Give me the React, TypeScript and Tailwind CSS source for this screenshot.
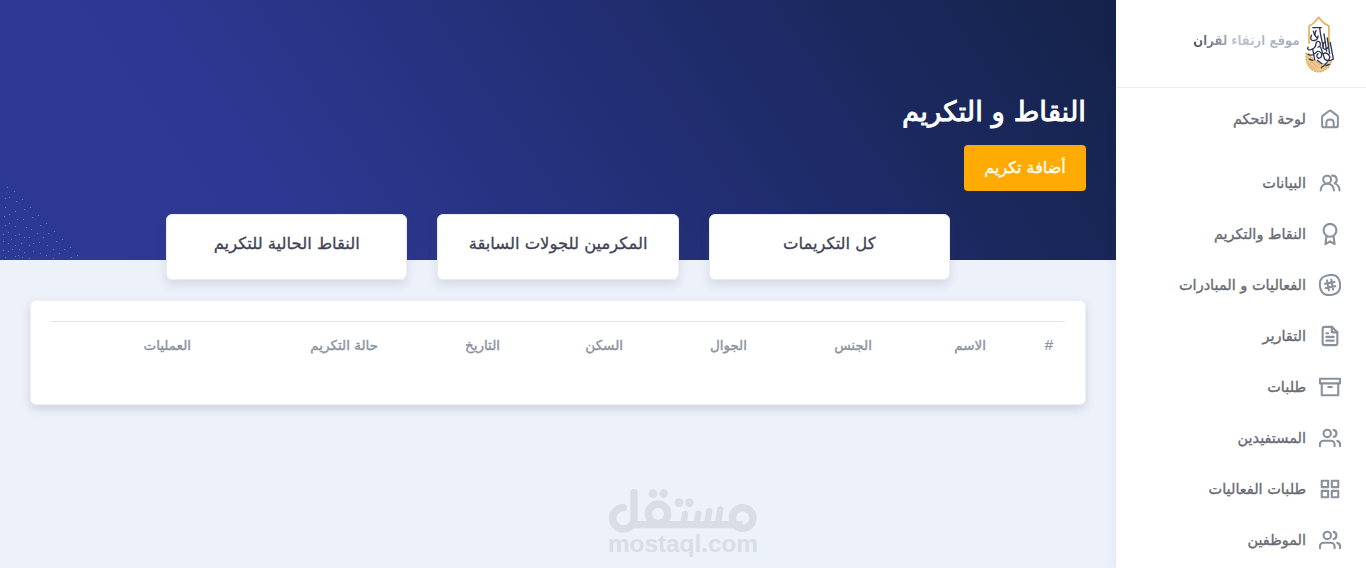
import type { ReactNode } from 'react';
import { FiArchive, FiAward, FiFileText, FiGrid, FiUsers } from 'react-icons/fi';

function Glyph({ children }: { children: ReactNode }) {
  return (
    <svg viewBox="0 0 24 24" className="size-[22px]" fill="none" stroke="currentColor" strokeWidth="2.2" strokeLinecap="round" strokeLinejoin="round">
      {children}
    </svg>
  );
}

const HomeIcon = () => (
  <Glyph>
    <path d="M3.4 9.9 Q3.4 8.9 4.2 8.3 L10.9 3.2 Q12 2.4 13.1 3.2 L19.8 8.3 Q20.6 8.9 20.6 9.9 V19 Q20.6 21 18.6 21 H5.4 Q3.4 21 3.4 19 Z" />
    <path d="M8 20.6 V16.4 Q8 12.6 12 12.6 Q16 12.6 16 16.4 V20.6" />
  </Glyph>
);

const PeopleIcon = () => (
  <Glyph>
    <circle cx="8.9" cy="8.3" r="4.3" />
    <path d="M1.8 20.2 C2 15.6 5 12.9 8.9 12.9 C12.9 12.9 16 15.6 16.4 20.2" />
    <path d="M14.2 4 C20 3.4 20.8 10.4 17 12.4 C20.2 13.4 22.2 16.2 22.4 20.2" />
  </Glyph>
);

const HashIcon = () => (
  <Glyph>
    <path d="M6.6 2.3 Q12 .4 16.8 1.4 Q21 2.8 22.4 8 Q23.8 13.4 22.2 17.4 Q20.6 20.8 16.4 22 Q10.6 23.8 6.9 22.4 Q2.9 20.6 1.6 16 Q.2 10.6 1.6 6.8 Q3 3.5 6.6 2.3Z" />
    <path d="M8.8 6.9 L10.8 18 M13.4 6 L15.4 17.1 M6.4 10.6 L17 8.7 M7.2 15.3 L17.8 13.4" />
  </Glyph>
);

const nav = [
  { label: 'لوحة التحكم', icon: <HomeIcon />, first: true },
  { label: 'البيانات', icon: <PeopleIcon /> },
  { label: 'النقاط والتكريم', icon: <FiAward size={22} strokeWidth={2.3} /> },
  { label: 'الفعاليات و المبادرات', icon: <HashIcon /> },
  { label: 'التقارير', icon: <FiFileText size={22} strokeWidth={2.3} /> },
  { label: 'طلبات', icon: <FiArchive size={22} strokeWidth={2.3} /> },
  { label: 'المستفيدين', icon: <FiUsers size={22} strokeWidth={2.3} /> },
  { label: 'طلبات الفعاليات', icon: <FiGrid size={22} strokeWidth={2.3} /> },
  { label: 'الموظفين', icon: <FiUsers size={22} strokeWidth={2.3} /> },
];

function Emblem() {
  return (
    <svg viewBox="20 15 96 178" className="h-[59px] w-8 shrink-0" fill="none" strokeLinejoin="round" strokeLinecap="round">
      <path d="M35 100 V48 Q48 42 53 35 L64 22 L75 35 Q82 42 95 48 V108" stroke="#e3ae5c" strokeWidth="5" />
      <path d="M26 130 Q24 170 48 182 Q66 192 84 180 Q100 170 102 156 Q84 162 66 158 Q44 150 34 128Z" fill="#ecc88f" />
      <path d="M26 130 Q24 170 48 182 Q66 192 84 180 Q100 170 102 156" stroke="#dfa652" strokeWidth="4" strokeDasharray="3 6" />
      <path d="M32 146 L60 172 M38 138 L78 174 M34 162 L52 178" stroke="#dba24e" strokeWidth="3" strokeDasharray="4 5" />
      <g stroke="#2b3554" strokeWidth="4">
        <path d="M46 53 H72 M48 64 L52 76 M67 54 L70 76 L78 112" />
        <path d="M56 62 Q48 78 60 84 M42 76 Q36 94 50 92 Q62 90 62 78 M80 72 L88 124" />
        <path d="M32 112 Q28 122 38 120 Q56 116 56 100 Q60 90 68 98 Q72 110 62 112 M90 84 L97 132 M99 98 L108 146" />
        <path d="M46 118 L52 150 M32 134 Q44 140 54 130 Q62 120 72 130 Q76 144 64 146 Q54 140 62 132" />
        <path d="M70 112 L82 148 Q92 158 108 148 M78 132 Q90 124 98 142 Q92 160 72 174 M60 152 L74 162" />
        <path d="M84 96 Q74 100 78 116 Q88 122 92 112 M36 148 L46 152 M86 168 L96 164" />
      </g>
    </svg>
  );
}

function Sidebar() {
  return (
    <aside className="z-10 flex w-[250px] shrink-0 flex-col bg-white shadow-[0_0_14px_rgba(40,60,110,0.05)]">
      <div className="flex h-22 items-start gap-1 border-b border-[#ebedf0] pt-[15px] pr-[30px]">
        <Emblem />
        <span className="mt-[13px] origin-right scale-x-[0.86] bg-gradient-to-l from-[#a9b1c1] from-10% via-[#bec3ce] via-60% to-[#4b5262] bg-clip-text text-[13.6px] leading-[24px] font-bold whitespace-nowrap text-transparent">
          موقع ارتقاء لقران
        </span>
      </div>
      <nav className="flex flex-col pt-[5px] pr-[25px]">
        {nav.map((item) => (
          <a key={item.label} className={item.first ? 'mb-[13px] flex h-[51px] items-center gap-[13px] text-[#8a919d]' : 'flex h-[51px] items-center gap-[13px] text-[#8a919d]'}>
            {item.icon}
            <span className="text-[14.5px] leading-6 whitespace-nowrap text-[#686b73] [-webkit-text-stroke:0.35px_#686b73]">{item.label}</span>
          </a>
        ))}
      </nav>
    </aside>
  );
}

const specks = [
  [22, 22], [43, 34], [16, 55], [28, 52], [49, 64], [67, 58], [16, 82], [46, 94], [73, 88], [91, 82], [13, 109], [28, 103],
  [52, 118], [70, 118], [97, 112], [115, 106], [16, 136], [28, 130], [46, 139], [79, 142], [94, 148], [121, 136], [139, 130],
  [10, 163], [25, 157], [46, 166], [58, 163], [73, 172], [88, 172], [112, 160], [130, 172], [145, 160], [163, 154], [10, 184],
  [34, 178], [25, 190], [46, 196], [64, 190], [88, 196], [100, 190], [118, 187], [142, 196], [169, 184], [187, 178], [10, 211],
  [25, 214], [37, 208], [58, 208], [73, 217], [100, 214], [121, 220], [160, 208], [178, 220], [193, 208], [211, 202], [16, 232],
  [46, 229], [55, 226], [67, 232], [88, 235], [139, 226], [160, 235], [214, 232], [232, 226],
];

function Watermark() {
  return (
    <div dir="ltr" className="absolute top-[480px] left-[590px] h-22 w-[190px] text-[#d8dde6]">
      <svg viewBox="0 0 570 264" className="h-22 w-[190px]" fill="none" stroke="currentColor" strokeWidth="22" strokeLinecap="round">
        <path d="M100 83 A32 32 0 1 0 132 115 V38" />
        <path d="M122 134 H458" strokeLinecap="butt" />
        <circle cx="204" cy="101" r="29" />
        <circle cx="458" cy="114" r="31" />
        <path d="M285 102 L281 130 M325 101 L320 130 M358 93 L351 130 M391 88 L384 130" strokeWidth="19" />
        <g fill="currentColor" stroke="none">
          <circle cx="189" cy="41" r="13" />
          <circle cx="221" cy="41" r="13" />
          <circle cx="267" cy="68" r="13" />
          <circle cx="298" cy="68" r="13" />
        </g>
      </svg>
      <span className="absolute top-[50px] left-[18px] font-['Liberation_Sans',sans-serif] text-[24.3px] leading-7 font-bold">mostaql.com</span>
    </div>
  );
}

const columns = ['#', 'الاسم', 'الجنس', 'الجوال', 'السكن', 'التاريخ', 'حالة التكريم', 'العمليات'];
const tabs = ['كل التكريمات', 'المكرمين للجولات السابقة', 'النقاط الحالية للتكريم'];

export default function App() {
  return (
    <div dir="rtl" className="relative flex h-[568px] overflow-hidden bg-[#ecf1fa] font-['DejaVu_Sans',sans-serif]">
      <Sidebar />
      <main className="flex min-w-0 flex-1 flex-col">
        <header className="relative flex h-[260px] shrink-0 flex-col items-start bg-[linear-gradient(56deg,#2e3994_8%,#2d3892_25%,#1d2a65_72%,#15234b_98%)] pt-[91px] pr-[30px]">
          <svg viewBox="0 0 360 240" className="absolute bottom-0 left-0 h-20 w-30" shapeRendering="crispEdges">
            {specks.map(([x, y]) => (
              <rect key={`${x}-${y}`} x={x - 1.5} y={y - 1.5} width="3" height="3" fill="#2b92d4" />
            ))}
          </svg>
          <h1 className="shrink-0 text-[27.6px] leading-[42px] text-white [-webkit-text-stroke:0.9px_white]">النقاط و التكريم</h1>
          <button className="mt-3 h-[46px] w-[122px] shrink-0 rounded-[4px] bg-[#ffab04] text-[16px] text-white [-webkit-text-stroke:0.3px_white]">أضافة تكريم</button>
          <div className="relative mt-[23px] flex w-[920px] shrink-0 justify-start gap-[30px] pr-[136px]">
            {tabs.map((tab) => (
              <div key={tab} className="flex h-[66px] w-[241.3px] shrink-0 justify-center rounded-[6px] border border-[#e8ecf4] bg-white pt-4 text-[16.4px] leading-[26px] whitespace-nowrap text-[#3f4254] shadow-[0_5px_10px_rgba(70,80,100,0.14)] [-webkit-text-stroke:0.3px_#3f4254]">
                {tab}
              </div>
            ))}
          </div>
        </header>
        <section className="mx-[30px] mt-10 h-[105px] rounded-[6px] border border-[#edf0f5] bg-white px-5 pt-5 shadow-[0_4px_10px_rgba(70,80,100,0.18)]">
          <div className="grid grid-cols-[67px_114px_125px_124px_123px_122px_187px_152px] border-t border-[#e1e5ec] pt-[11px]">
            {columns.map((column) => (
              <div key={column} className={column === '#' ? "pr-3 font-['Liberation_Sans',sans-serif] text-[15px] leading-6 text-[#8d94a0] [-webkit-text-stroke:0.2px_#8d94a0]" : 'pr-3 text-[13.5px] leading-6 whitespace-nowrap text-[#8d94a0] [-webkit-text-stroke:0.4px_#8d94a0]'}>
                {column}
              </div>
            ))}
          </div>
        </section>
      </main>
      <Watermark />
    </div>
  );
}
